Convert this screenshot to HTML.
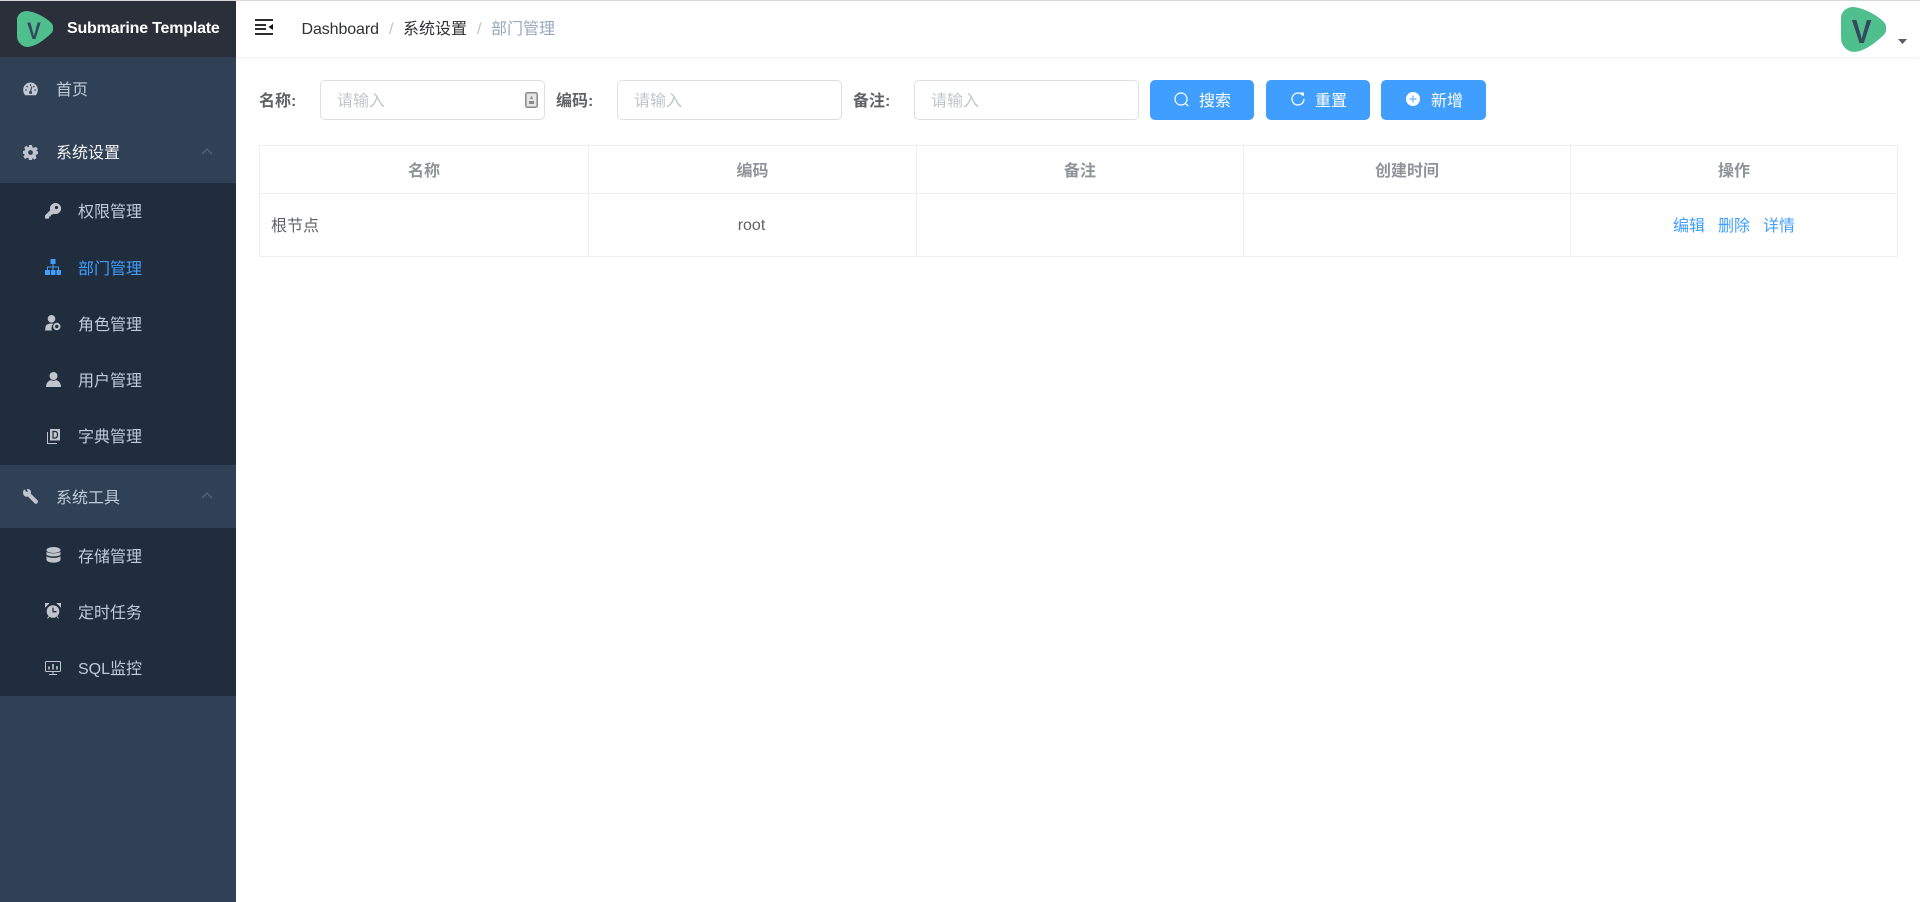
<!DOCTYPE html>
<html lang="zh">
<head>
<meta charset="utf-8">
<title>部门管理</title>
<style>
html,body{margin:0;padding:0;width:1920px;height:902px;overflow:hidden;background:#fff;font-family:"Liberation Sans","Noto Sans CJK SC",sans-serif;font-size:16px}
.a{position:absolute}
.t{position:absolute;line-height:24px;height:24px;white-space:nowrap}
.abs{position:absolute;display:block}
.s{color:#bfcbd9}
.lab{font-weight:700;color:#606266}
.inp{position:absolute;top:80px;width:223px;height:38px;border:1px solid #dcdfe6;border-radius:5px;background:#fff}
.ph{color:#c0c4cc}
.btn{position:absolute;top:80px;height:40px;background:#409eff;border-radius:5px}
.th{color:#909399;font-weight:700;text-align:center}
.td{color:#606266}
.lnk{color:#409eff}
.ln{position:absolute;background:#ebeef5}
</style>
</head>
<body>
<div class="a" style="left:0;top:0;width:1920px;height:1px;background:#d8d8d8;z-index:5"></div>

<!-- sidebar -->
<div class="a" style="left:0;top:0;width:236px;height:902px;background:#304156"></div>
<div class="a" style="left:0;top:1px;width:236px;height:56px;background:#2b2f3a"></div>
<div class="a" style="left:0;top:183px;width:236px;height:282px;background:#1f2d3d"></div>
<div class="a" style="left:0;top:528px;width:236px;height:168px;background:#1f2d3d"></div>

<svg class="abs" style="left:17px;top:11px" width="36" height="36" viewBox="0 0 100 100"><path d="M28 0C50 2 76 16 92 30C104 41 104 55 92 65C76 80 54 96 36 99C20 103 6 92 1 78C-1 60-1 40 0 22C2 8 14 0 28 0Z" fill="#4fc08d"/><text x="47" y="78" text-anchor="middle" font-size="68" font-weight="700" font-family="Liberation Sans" fill="#35495e" textLength="38" lengthAdjust="spacingAndGlyphs">V</text></svg>
<div class="t" style="left:67px;top:17px;color:#fff;font-weight:700;letter-spacing:-.2px">Submarine Template</div>

<div class="t s" style="left:56px;top:79px">首页</div>
<div class="t" style="left:56px;top:142px;color:#f4f4f5">系统设置</div>
<div class="t s" style="left:78px;top:201px">权限管理</div>
<div class="t" style="left:78px;top:258px;color:#409eff">部门管理</div>
<div class="t s" style="left:78px;top:314px">角色管理</div>
<div class="t s" style="left:78px;top:370px">用户管理</div>
<div class="t s" style="left:78px;top:426px">字典管理</div>
<div class="t s" style="left:56px;top:487px">系统工具</div>
<div class="t s" style="left:78px;top:546px">存储管理</div>
<div class="t s" style="left:78px;top:602px">定时任务</div>
<div class="t s" style="left:78px;top:658px">SQL监控</div>

<!-- chevrons -->
<svg class="abs" style="left:201px;top:147px" width="12" height="8" viewBox="0 0 12 8"><path d="M1 7L6 2L11 7" fill="none" stroke="#5f6b7a" stroke-width="1"/></svg>
<svg class="abs" style="left:201px;top:491px" width="12" height="8" viewBox="0 0 12 8"><path d="M1 7L6 2L11 7" fill="none" stroke="#5f6b7a" stroke-width="1"/></svg>

<!-- gauge -->
<svg class="abs" style="left:23px;top:82px" width="15" height="14" viewBox="0 0 15 14"><path d="M7.5 0.5A7.3 7.3 0 0 0 .2 7.8C.2 10 1 11.8 2.2 13.3H12.8C14 11.8 14.8 10 14.8 7.8A7.3 7.3 0 0 0 7.5 .5Z" fill="#c0c9d6"/><path d="M7.5 2V4M3.5 4L4.7 5.2M11.5 4L10.3 5.2M2 8H3.8M13 8H11.2M8.8 4.5L7.5 10" stroke="#304156" stroke-width="1.1" fill="none"/><circle cx="7.5" cy="10.5" r="1.5" fill="#304156"/></svg>
<!-- gear -->
<svg class="abs" style="left:23px;top:145px" width="15" height="15" viewBox="0 0 15 15"><path d="M6 0H9L9.4 2.2L10.9 2.9L12.9 1.7L14.9 4L13.4 5.5L13.9 6.3L15 6.3V9L13.2 9.6L12.7 11L13.6 13L11.3 14.6L9.5 13L9 15H6L5.5 13L4 12.7L2.2 14L.3 11.6L1.7 10L1.2 8.9L0 8.7V6L1.7 5.6L2.2 4.2L1.2 2.5L3.4 .8L5 2.2L5.7 1.9Z" fill="#c0c4cc"/><circle cx="7.5" cy="7.5" r="2.4" fill="#304156"/></svg>
<!-- key -->
<svg class="abs" style="left:45px;top:203px" width="16" height="16" viewBox="0 0 16 16"><path d="M10.5 0A5.5 5.5 0 0 0 5.2 7.2L0 12.4V15.6H3.6L4.2 15V13.4H5.8L6 11.6H7.6L8.8 10.7A5.5 5.5 0 1 0 10.5 0Z" fill="#c0c4cc"/><circle cx="11.5" cy="4.5" r="1.6" fill="#1f2d3d"/></svg>
<!-- sitemap -->
<svg class="abs" style="left:45px;top:259px" width="16" height="16" viewBox="0 0 16 16"><g fill="#409eff"><rect x="5.5" y="0" width="5" height="5"/><rect x="0" y="11" width="5" height="5"/><rect x="6" y="11" width="4.5" height="5"/><rect x="11.5" y="11" width="4.5" height="5"/></g><path d="M8 5V11M2.5 11V8H13.5V11" stroke="#409eff" fill="none"/></svg>
<!-- user gear -->
<svg class="abs" style="left:45px;top:315px" width="16" height="16" viewBox="0 0 16 16"><circle cx="6.5" cy="3.8" r="3.8" fill="#c0c4cc"/><path d="M0 15.5L.5 12C1 9.5 3 8.5 6.5 8.5L8.5 8.7C7 10 6 12 6.8 15.5Z" fill="#c0c4cc"/><circle cx="11.8" cy="11.5" r="2.7" fill="none" stroke="#c0c4cc" stroke-width="2"/></svg>
<!-- user -->
<svg class="abs" style="left:46px;top:372px" width="15" height="15" viewBox="0 0 15 15"><circle cx="7.5" cy="4" r="4" fill="#c0c4cc"/><path d="M0 15C0 10.5 3 8.3 5 8L7.5 9L10 8C12 8.3 15 10.5 15 15Z" fill="#c0c4cc"/></svg>
<!-- dict -->
<svg class="abs" style="left:47px;top:429px" width="13" height="15" viewBox="0 0 13 15"><rect x="3" y="0" width="10" height="11.5" fill="#c0c4cc"/><path d="M.5 3V14.5H10" fill="none" stroke="#c0c4cc"/><path d="M6 2.5H8C9.8 2.5 10.5 4 10.5 5.7C10.5 7.5 9.8 9 8 9H6Z" fill="none" stroke="#1f2d3d" stroke-width="1.2"/></svg>
<!-- wrench -->
<svg class="abs" style="left:23px;top:489px" width="15" height="15" viewBox="0 0 15 15"><path d="M1 .3L3.8 3L5 2.6L3.6 .3C5.5-.3 7.2.3 7.8 2C8.2 3 8 4 7.7 4.6L14.6 11.3C15.2 12 15 13.4 14.2 14.2C13.4 15 12.3 15 11.6 14.3L5 7.6C3.6 8 2.2 7.7 1.2 6.7C.2 5.7-.2 3.9.1 2.6Z" fill="#c0c4cc"/></svg>
<!-- database -->
<svg class="abs" style="left:46px;top:547px" width="15" height="16" viewBox="0 0 15 16"><g fill="#c0c4cc"><ellipse cx="7.5" cy="3" rx="7" ry="3"/><path d="M.5 4.5C2 7 13 7 14.5 4.5V7.5C13 10 2 10 .5 7.5Z"/><path d="M.5 9C2 11.5 13 11.5 14.5 9V13C13 16.5 2 16.5 .5 13Z"/></g></svg>
<!-- alarm -->
<svg class="abs" style="left:45px;top:603px" width="16" height="16" viewBox="0 0 16 16"><circle cx="8" cy="8.5" r="6.3" fill="#c0c4cc"/><path d="M8 4.5V8.7H11.5" fill="none" stroke="#1f2d3d" stroke-width="1.3"/><path d="M0 4L3.5 .5L0 .5ZM16 4L12.5 .5L16 .5ZM2.5 15.5L4 13.5M13.5 15.5L12 13.5" fill="#c0c4cc" stroke="#c0c4cc"/></svg>
<!-- monitor -->
<svg class="abs" style="left:45px;top:661px" width="16" height="14" viewBox="0 0 16 14"><rect x=".5" y=".5" width="15" height="10" rx="1" fill="none" stroke="#c0c4cc"/><path d="M4 8.5V5.5M8 8.5V3M12 8.5V5" stroke="#c0c4cc" stroke-width="1.6"/><path d="M4 13.5H12M8 11V13" stroke="#c0c4cc"/></svg>

<!-- navbar -->
<div class="a" style="left:236px;top:1px;width:1684px;height:56px;background:#fff;box-shadow:0 1px 4px rgba(0,21,41,.08)"></div>
<svg class="abs" style="left:255px;top:19px" width="18" height="16" viewBox="0 0 18 16"><path d="M0 1H18M0 6H11M0 10H11M0 15H18" stroke="#111" stroke-width="1.8" fill="none"/><path d="M18 5V11L13.5 8Z" fill="#111"/></svg>
<div class="t" style="left:301.5px;top:18px;color:#303133;letter-spacing:-.1px">Dashboard</div>
<div class="t" style="left:389px;top:18px;color:#c0c4cc">/</div>
<div class="t" style="left:403px;top:18px;color:#303133">系统设置</div>
<div class="t" style="left:477px;top:18px;color:#c0c4cc">/</div>
<div class="t" style="left:491px;top:18px;color:#97a8be">部门管理</div>

<svg class="abs" style="left:1841px;top:7px" width="45" height="45" viewBox="0 0 100 100"><path d="M28 0C50 2 76 16 92 30C104 41 104 55 92 65C76 80 54 96 36 99C20 103 6 92 1 78C-1 60-1 40 0 22C2 8 14 0 28 0Z" fill="#4fc08d"/><text x="46" y="80" text-anchor="middle" font-size="74" font-weight="700" font-family="Liberation Sans" fill="#35495e" textLength="44" lengthAdjust="spacingAndGlyphs">V</text></svg>
<svg class="abs" style="left:1898px;top:39px" width="9" height="5" viewBox="0 0 9 5"><path d="M0 0H9L4.5 5Z" fill="#5a5e66"/></svg>

<!-- search form -->
<div class="t lab" style="left:259px;top:90px">名称:</div>
<div class="inp" style="left:320px"></div>
<div class="t ph" style="left:337px;top:90px">请输入</div>
<svg class="abs" style="left:525px;top:92px" width="13" height="16" viewBox="0 0 13 16"><rect x=".8" y=".8" width="11.4" height="14.4" rx="1.5" fill="#e6e6e6" stroke="#8a8a8a" stroke-width="1.5"/><path d="M6.5 3.5L8 7H5ZM4 9H9V12H4Z" fill="#8a8a8a"/></svg>
<div class="t lab" style="left:556px;top:90px">编码:</div>
<div class="inp" style="left:617px"></div>
<div class="t ph" style="left:634px;top:90px">请输入</div>
<div class="t lab" style="left:853px;top:90px">备注:</div>
<div class="inp" style="left:914px"></div>
<div class="t ph" style="left:931px;top:90px">请输入</div>

<div class="btn" style="left:1150px;width:104px"></div>
<svg class="abs" style="left:1174px;top:92px" width="16" height="15" viewBox="0 0 16 15"><circle cx="7" cy="7" r="6" fill="none" stroke="#fff" stroke-width="1.2"/><path d="M11 11.5L14.5 14" stroke="#fff" stroke-width="1.2"/></svg>
<div class="t" style="left:1199px;top:90px;color:#fff">搜索</div>
<div class="btn" style="left:1266px;width:104px"></div>
<svg class="abs" style="left:1291px;top:92px" width="14" height="14" viewBox="0 0 14 14"><path d="M11.8 3.4A6 6 0 1 0 13 7" fill="none" stroke="#fff" stroke-width="1.3"/><path d="M9.5 .5L13 .5L13 4.5Z" fill="#fff"/></svg>
<div class="t" style="left:1315px;top:90px;color:#fff">重置</div>
<div class="btn" style="left:1381px;width:105px"></div>
<svg class="abs" style="left:1406px;top:92px" width="14" height="14" viewBox="0 0 14 14"><circle cx="7" cy="7" r="7" fill="#fff"/><path d="M7 3.5V10.5M3.5 7H10.5" stroke="#7dbcff" stroke-width="1.4"/></svg>
<div class="t" style="left:1431px;top:90px;color:#fff">新增</div>

<!-- table -->
<div class="ln" style="left:259px;top:145px;width:1639px;height:1px"></div>
<div class="ln" style="left:259px;top:193px;width:1639px;height:1px"></div>
<div class="ln" style="left:259px;top:256px;width:1639px;height:1px"></div>
<div class="ln" style="left:259px;top:145px;width:1px;height:112px"></div>
<div class="ln" style="left:588px;top:145px;width:1px;height:112px"></div>
<div class="ln" style="left:916px;top:145px;width:1px;height:112px"></div>
<div class="ln" style="left:1243px;top:145px;width:1px;height:112px"></div>
<div class="ln" style="left:1570px;top:145px;width:1px;height:112px"></div>
<div class="ln" style="left:1897px;top:145px;width:1px;height:112px"></div>

<div class="t th" style="left:260px;top:160px;width:328px">名称</div>
<div class="t th" style="left:589px;top:160px;width:327px">编码</div>
<div class="t th" style="left:917px;top:160px;width:326px">备注</div>
<div class="t th" style="left:1244px;top:160px;width:326px">创建时间</div>
<div class="t th" style="left:1571px;top:160px;width:326px">操作</div>

<div class="t td" style="left:271px;top:215px">根节点</div>
<div class="t td" style="left:588px;top:214px;width:327px;text-align:center">root</div>
<div class="t lnk" style="left:1673px;top:215px">编辑</div>
<div class="t lnk" style="left:1718px;top:215px">删除</div>
<div class="t lnk" style="left:1763px;top:215px">详情</div>
</body>
</html>
